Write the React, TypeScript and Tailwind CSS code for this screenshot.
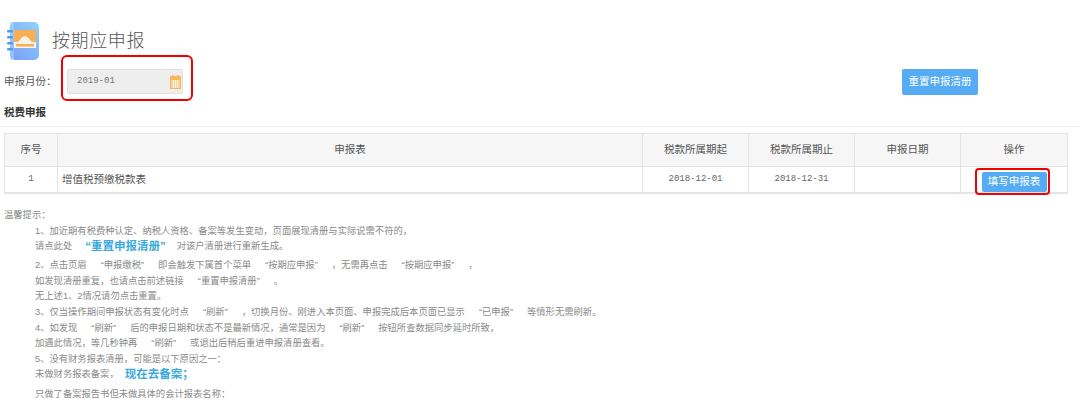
const cjk = "font-['Liberation_Sans','Noto_Sans_CJK_SC',sans-serif]";

const columns = [
  { title: '序号', width: 'w-[52px]' },
  { title: '申报表', width: 'w-[585px]' },
  { title: '税款所属期起', width: 'w-[106px]' },
  { title: '税款所属期止', width: 'w-[106px]' },
  { title: '申报日期', width: 'w-[106px]' },
  { title: '操作', width: 'w-[107px]' },
];

function NotebookIcon() {
  return (
    <svg width="34" height="40" viewBox="0 0 34 40" className="shrink-0">
      <defs>
        <linearGradient id="book" x1="0.9" y1="0" x2="0.1" y2="1">
          <stop offset="0" stopColor="#8fd0fb" />
          <stop offset="1" stopColor="#7a9ff5" />
        </linearGradient>
      </defs>
      <rect x="3" y="1" width="29" height="38" rx="5" fill="url(#book)" />
      <rect x="3" y="1" width="4" height="38" fill="#a9d4fb" opacity="0.6" />
      <rect x="0" y="9" width="6" height="2.5" rx="1.2" fill="#4f9bf0" />
      <rect x="0" y="15" width="6" height="2.5" rx="1.2" fill="#4f9bf0" />
      <rect x="0" y="21" width="6" height="2.5" rx="1.2" fill="#4f9bf0" />
      <rect x="0" y="27" width="6" height="2.5" rx="1.2" fill="#4f9bf0" />
      <rect x="7" y="9" width="22" height="18" fill="#f4f4ee" />
      <rect x="7" y="9" width="22" height="12" fill="#f8ae55" />
      <path d="M10 21 c3 0 4-6 8-6 s5 6 8 6z" fill="#fdf3e4" />
      <rect x="9" y="23" width="18" height="2.5" fill="#f8ae55" />
    </svg>
  );
}

function CalendarIcon() {
  return (
    <svg width="11" height="14" viewBox="0 0 11 14">
      <rect x="0" y="1" width="11" height="13" fill="#f9b65c" />
      <rect x="2" y="0" width="1.5" height="2" fill="#f9b65c" />
      <rect x="7.5" y="0" width="1.5" height="2" fill="#f9b65c" />
      <rect x="1" y="5" width="9" height="8" fill="#fbd298" />
      <path d="M3.5 5v8M5.5 5v8M7.5 5v8" stroke="#fff4e2" strokeWidth="1" />
    </svg>
  );
}

function Quoted({ children }: { children: string }) {
  return <span className="mx-[14px]">“{children}”</span>;
}

function HintLine({ children, className = '' }: { children: React.ReactNode; className?: string }) {
  return <p className={`pl-[35px] whitespace-nowrap ${className}`}>{children}</p>;
}

export default function App() {
  return (
    <div className={`relative w-[1080px] h-[400px] overflow-hidden bg-white text-[#444] ${cjk}`}>
      <div className="flex items-center gap-[11px] pl-[7px] pt-[21px] h-[61px]">
        <NotebookIcon />
        <h1 className="text-[18px] leading-[36px] tracking-[0.6px] text-[#555] font-light">按期应申报</h1>
      </div>

      <div className="flex items-center h-[25px] mt-[8px] pl-[4px]">
        <span className="w-[63px] text-[10.5px] text-[#555]">申报月份&#xFF1A;</span>
        <div className="flex items-center justify-between w-[116px] h-[25px] pl-[9px] pr-[1px] bg-[#eeeeee] border border-[#e0e0e0] rounded-[2px]">
          <span className="text-[9px] font-['Liberation_Mono',monospace] text-[#777]">2019-01</span>
          <CalendarIcon />
        </div>
        <button className="ml-[719px] w-[76px] h-[26px] bg-[#55acf4] rounded-[2px] text-white text-[10.5px] whitespace-nowrap">重置申报清册</button>
      </div>

      <div className="mt-[9px] pl-[4px] pt-[1px] h-[24px] border-b border-[#eeeeee]">
        <span className="block text-[10.5px] leading-[16px] font-bold text-[#333]">税费申报</span>
      </div>

      <div className="ml-[4px] mt-[6px] w-[1064px] border border-[#e4e4e4] border-b-2 text-[#555]">
        <div className="flex h-[33px] bg-[#f6f6f6] border-b border-[#e4e4e4]">
          {columns.map((col, i) => (
            <div key={col.title} className={`${col.width} flex items-center justify-center text-[10.5px] ${i > 0 ? 'border-l border-[#e4e4e4]' : ''}`}>
              {col.title}
            </div>
          ))}
        </div>
        <div className="flex h-[25px] text-[10px]">
          <div className="w-[52px] flex items-center justify-center font-['Liberation_Mono',monospace] text-[9px] text-[#666]">1</div>
          <div className="w-[585px] flex items-center pl-[4px] border-l border-[#e4e4e4] text-[10.5px]">增值税预缴税款表</div>
          <div className="w-[106px] flex items-center justify-center border-l border-[#e4e4e4] font-['Liberation_Mono',monospace] text-[9px] text-[#666]">2018-12-01</div>
          <div className="w-[106px] flex items-center justify-center border-l border-[#e4e4e4] font-['Liberation_Mono',monospace] text-[9px] text-[#666]">2018-12-31</div>
          <div className="w-[106px] border-l border-[#e4e4e4]" />
          <div className="w-[107px] flex items-end justify-center border-l border-[#e4e4e4]">
            <button className="w-[65px] h-[20px] bg-[#55acf4] rounded-[2px] text-white text-[10.5px] whitespace-nowrap">填写申报表</button>
          </div>
        </div>
      </div>

      <div className="mt-[14px] text-[9.3px] leading-[15.6px] text-[#8a8a8a]">
        <p className="pl-[4px]">温馨提示&#xFF1A;</p>
        <HintLine>1、加近期有税费种认定、纳税人资格、备案等发生变动&#xFF0C;页面展现清册与实际说需不符的&#xFF0C;</HintLine>
        <HintLine className="flex items-center h-[16px]">
          请点此处
          <span className="ml-[13px] mr-[11px] text-[11.5px] font-bold text-[#3aa9dc]">“重置申报清册”</span>
          对该户清册进行重新生成。
        </HintLine>
        <HintLine className="mt-[3px]">
          2、点击页眉<Quoted>申报缴税</Quoted>即会触发下属首个菜单<Quoted>按期应申报</Quoted>&#xFF0C;无需再点击<Quoted>按期应申报</Quoted>&#xFF0C;
        </HintLine>
        <HintLine>
          如发现清册重复&#xFF0C;也请点击前述链接<Quoted>重置申报清册</Quoted>。
        </HintLine>
        <HintLine>无上述1、2情况请勿点击重置。</HintLine>
        <HintLine>
          3、仅当操作期间申报状态有变化时点<Quoted>刷新</Quoted>&#xFF0C;切换月份、刚进入本页面、申报完成后本页面已显示<Quoted>已申报</Quoted>等情形无需刷新。
        </HintLine>
        <HintLine>
          4、如发现<Quoted>刷新</Quoted>后的申报日期和状态不是最新情况&#xFF0C;通常是因为<Quoted>刷新</Quoted>按钮所查数据同步延时所致&#xFF0C;
        </HintLine>
        <HintLine>
          加遇此情况&#xFF0C;等几秒钟再<Quoted>刷新</Quoted>或退出后稍后重进申报清册查看。
        </HintLine>
        <HintLine>5、没有财务报表清册&#xFF0C;可能是以下原因之一&#xFF1A;</HintLine>
        <HintLine className="flex items-center h-[15px]">
          未做财务报表备案&#xFF0C;
          <span className="ml-[6px] text-[11.5px] font-bold text-[#3aa9dc]">现在去备案&#xFF1B;</span>
        </HintLine>
        <HintLine className="mt-[5px]">只做了备案报告书但未做具体的会计报表名称&#xFF1A;</HintLine>
      </div>

      {/* red annotation boxes */}
      <div className="absolute left-[61px] top-[55px] w-[132px] h-[46px] border-2 border-[#f00000] rounded-[6px]" />
      <div className="absolute left-[975px] top-[168px] w-[75px] h-[27px] border-2 border-[#f00000] rounded-[4px]" />
    </div>
  );
}
